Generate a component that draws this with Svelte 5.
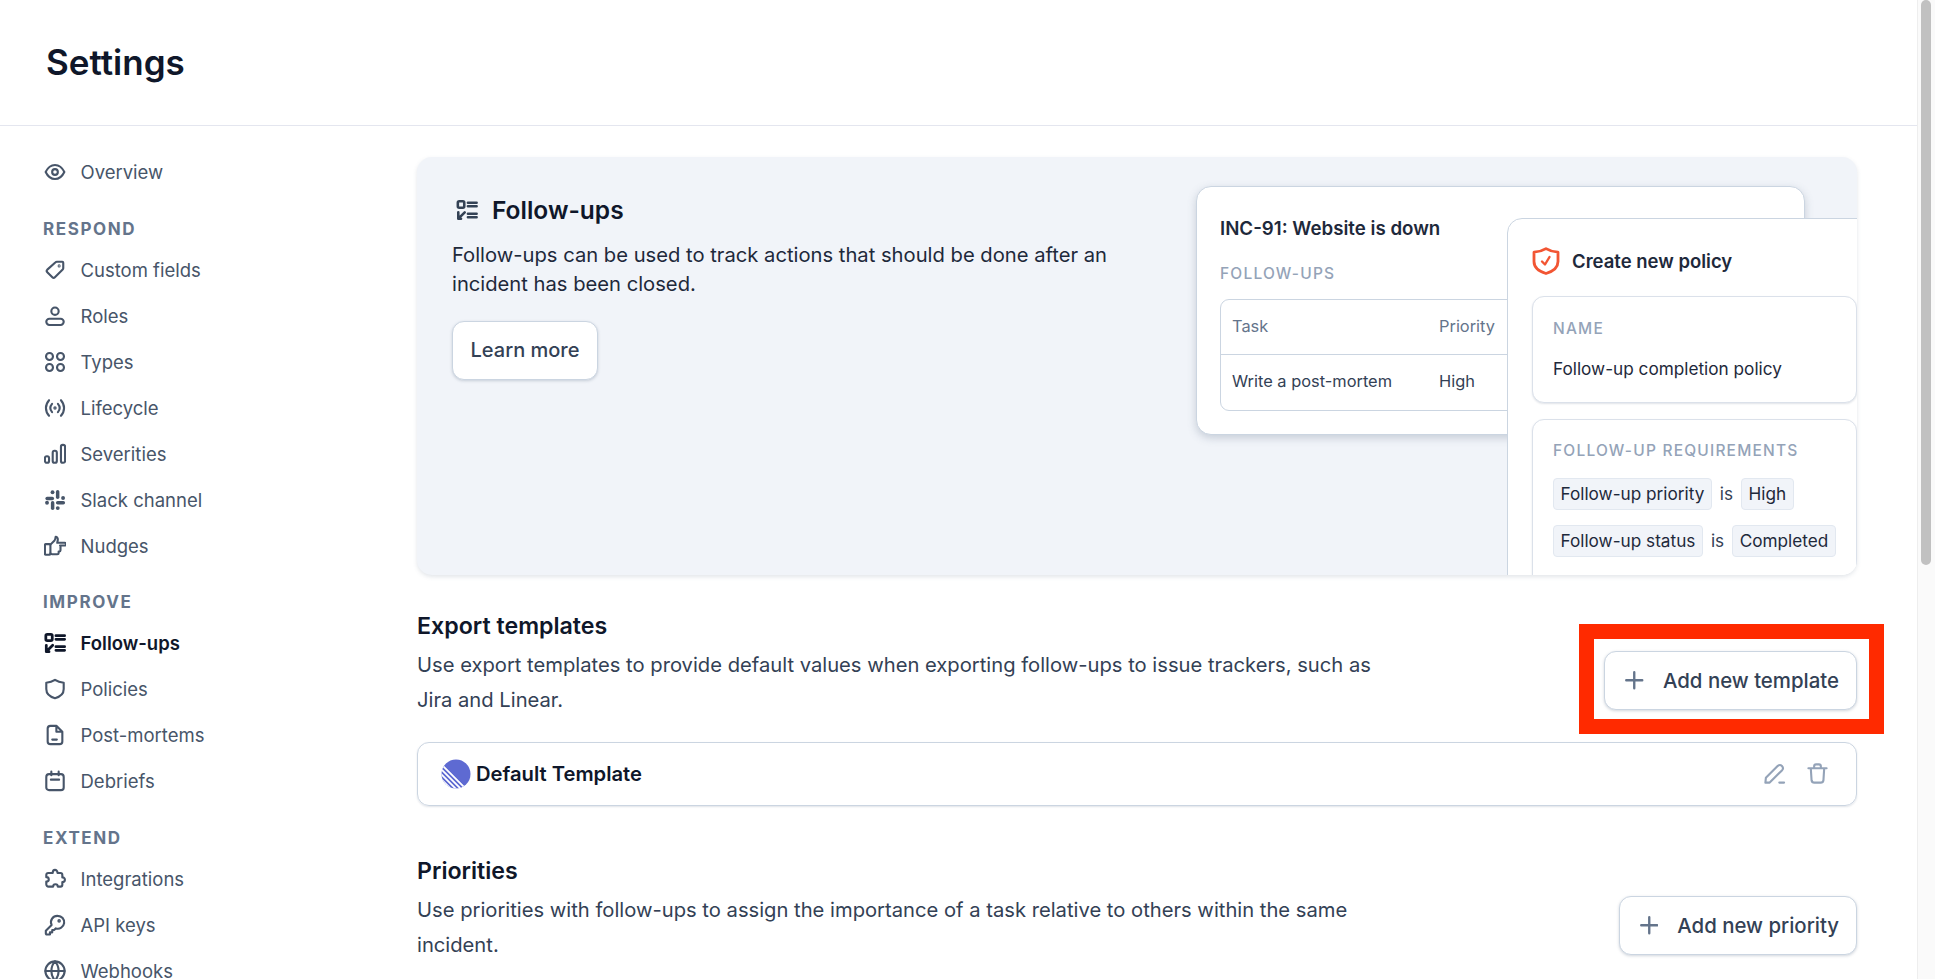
<script>
const icons = {
  eye: '<path d="M1.800 12C4.200 7 7.800 4.300 12 4.300S19.800 7 22.200 12c-2.400 5-6 7.700-10.200 7.700S4.200 17 1.800 12z"/><circle cx="12" cy="12" r="3.100"/>',
  tag: '<path d="M14 3h6a1 1 0 0 1 1 1v6a2 2 0 0 1-.6 1.400l-8.500 8.500a2 2 0 0 1-2.800 0l-5.500-5.500a2 2 0 0 1 0-2.800l9-8A2 2 0 0 1 14 3z"/><circle cx="16.500" cy="7.500" r=".5"/>',
  user: '<circle cx="12" cy="6.800" r="4"/><rect x="2.500" y="15" width="19" height="6.800" rx="3.400"/>',
  types: '<circle cx="6" cy="6" r="3.800"/><circle cx="18" cy="6" r="3.800"/><circle cx="6" cy="18" r="3.800"/><circle cx="18" cy="18" r="3.800"/>',
  cycle: '<path d="M5.500 3.500c-4.500 5-4.500 12 0 17M18.500 3.500c4.500 5 4.500 12 0 17M8.800 7.500c-2.400 2.800-2.400 6.200 0 9M15.200 7.500c2.400 2.800 2.400 6.200 0 9"/><circle cx="12" cy="12" r=".7"/>',
  sev: '<rect x="1" y="14.500" width="4.500" height="7" rx="2"/><rect x="9.500" y="8.500" width="4.500" height="13" rx="2"/><rect x="18.500" y="2" width="4.500" height="19.500" rx="2"/>',
  slack: '<g fill="currentColor" stroke="none"><rect x="1.500" y="8.500" width="9.500" height="3.800" rx="1.900"/><rect x="13" y="1" width="3.800" height="10" rx="1.900"/><rect x="13" y="13" width="10" height="3.800" rx="1.900"/><rect x="7.500" y="13" width="3.800" height="10" rx="1.900"/><circle cx="9.300" cy="3.500" r="2.100"/><circle cx="20.800" cy="9.800" r="2.100"/><circle cx="15" cy="20.800" r="2.100"/><circle cx="3.300" cy="15" r="2.100"/></g>',
  thumb: '<path d="M7 10.500 11.500 6c.7-1 1-2.200 1.200-4 1.600 0 2.600 1.500 2.300 3.500l-.5 3h8a1.500 1.500 0 0 1 0 3H17.500M18 11.500v5a1.500 1.500 0 0 1-1.500 1.500H16M16 18v1.500a1.500 1.500 0 0 1-1.500 1.500H9c-1 0-2-.3-2-1"/><rect x="1" y="10" width="6" height="11.500" rx="1"/>',
  check: '<rect x="2" y="2.500" width="7" height="7" rx="1.500"/><path d="M13 4h9.500M13 8h9.500M13 16h9.500M13 20h9.500M9.500 14.500l-5.500 5.500M2.500 14.500v7h3"/>',
  shield: '<path d="M12 2c3 1.900 5.800 2.700 9.500 3.100v6.900c0 5-3.700 8.500-9.500 10-5.800-1.500-9.500-5-9.500-10V5.100C6.200 4.700 9 3.900 12 2z"/>',
  doc: '<path d="M13.500 2H7a3 3 0 0 0-3 3v14a3 3 0 0 0 3 3h10a3 3 0 0 0 3-3V8.500zM13.500 2v6.500H20M9 17h5"/>',
  cal: '<rect x="2.500" y="4.500" width="19" height="17.500" rx="3"/><path d="M8 1.800v4M16 1.800v4M7.500 10.500h9"/>',
  puzzle: '<path d="M9.500 5.500c0-2 1.200-3.500 2.500-3.500s2.800 1.500 2.800 3.500h3.200a2 2 0 0 1 2 2v2.800c2-.2 2.800 1.400 2.800 2.400 0 1.300-1 2.600-2.800 2.600v3a2 2 0 0 1-2 2h-3c0-2-1.400-2.500-2.500-2.500s-2.500.5-2.500 2.500H5a2.500 2.500 0 0 1-2.500-2.500v-3c2 0 2.700-1.200 2.700-2.300S4.500 10 2.500 10V7.500a2 2 0 0 1 2-2z"/>',
  key: '<path d="M15 2a7 7 0 1 1-2 13.700l-2 1.800H9V20H6.500v2.300H3a1 1 0 0 1-1-1v-3l6.300-6.300A7 7 0 0 1 15 2z"/><circle cx="16.500" cy="7.500" r=".8"/>',
  globe: '<circle cx="12" cy="12" r="10.500"/><path d="M1.500 12h21M12 1.500c-5.300 5.800-5.300 15.200 0 21M12 1.500c5.300 5.800 5.300 15.200 0 21"/>'
}

const nav = [
  { items: [{ icon: 'eye', label: 'Overview' }] },
  { title: 'RESPOND', items: [
    { icon: 'tag', label: 'Custom fields' },
    { icon: 'user', label: 'Roles' },
    { icon: 'types', label: 'Types' },
    { icon: 'cycle', label: 'Lifecycle' },
    { icon: 'sev', label: 'Severities' },
    { icon: 'slack', label: 'Slack channel' },
    { icon: 'thumb', label: 'Nudges' }
  ] },
  { title: 'IMPROVE', items: [
    { icon: 'check', label: 'Follow-ups', active: true },
    { icon: 'shield', label: 'Policies' },
    { icon: 'doc', label: 'Post-mortems' },
    { icon: 'cal', label: 'Debriefs' }
  ] },
  { title: 'EXTEND', items: [
    { icon: 'puzzle', label: 'Integrations' },
    { icon: 'key', label: 'API keys' },
    { icon: 'globe', label: 'Webhooks' }
  ] }
]
</script>

{#snippet icon(name, cls)}
  <svg class={cls} viewBox="0 0 24 24" fill="none" stroke="currentColor" stroke-width="2.300" stroke-linecap="round" stroke-linejoin="round">{@html icons[name]}</svg>
{/snippet}

{#snippet plus()}
  <svg class="plus" viewBox="0 0 18 18" fill="none" stroke="currentColor" stroke-width="2.300" stroke-linecap="round"><path d="M9 1.200v15.600M1.200 9h15.600"/></svg>
{/snippet}

<div class="root">
  <div class="page">
    <header><h1>Settings</h1></header>
    <div class="body">
      <nav>
        {#each nav as group}
          <div class="group">
            {#if group.title}<div class="group-title">{group.title}</div>{/if}
            {#each group.items as item}
              <div class="nav-item" class:active={item.active}>
                {@render icon(item.icon, 'nav-icon')}
                <span>{item.label}</span>
              </div>
            {/each}
          </div>
        {/each}
      </nav>

      <main>
        <section class="hero">
          <div class="hero-text">
            <h2>{@render icon('check', 'hero-icon')}Follow-ups</h2>
            <p>Follow-ups can be used to track actions that should be done after an incident has been closed.</p>
            <button class="btn learn">Learn more</button>
          </div>
          <div class="art">
            <div class="inc-card">
              <div class="inc-title">INC-91: Website is down</div>
              <div class="label">FOLLOW-UPS</div>
              <div class="table">
                <div class="tr head"><span class="c1">Task</span><span>Priority</span></div>
                <div class="tr"><span class="c1">Write a post-mortem</span><span>High</span></div>
              </div>
            </div>
            <div class="policy-card">
              <div class="policy-title">
                <svg class="shield" viewBox="0 0 28 28" fill="none" stroke="#f25533" stroke-width="2.800" stroke-linecap="round" stroke-linejoin="round"><path d="M14 1.600c3.400 2.100 7 3.200 12 3.600v9.300c0 5.600-4.700 9.800-12 12-7.300-2.200-12-6.400-12-12V5.200c5-.4 8.600-1.500 12-3.600z"/><path d="m10 14.500 3 3 4.500-7.500" stroke-width="2.400"/></svg>
                Create new policy
              </div>
              <div class="box name-box">
                <div class="label">NAME</div>
                <div class="value">Follow-up completion policy</div>
              </div>
              <div class="box req-box">
                <div class="label">FOLLOW-UP REQUIREMENTS</div>
                <div class="req"><span class="chip">Follow-up priority</span>is<span class="chip">High</span></div>
                <div class="req"><span class="chip">Follow-up status</span>is<span class="chip">Completed</span></div>
              </div>
            </div>
          </div>
        </section>

        <section class="block first">
          <div class="block-head">
            <div class="block-text">
              <h3>Export templates</h3>
              <p>Use export templates to provide default values when exporting follow-ups to issue trackers, such as Jira and Linear.</p>
            </div>
            <button class="btn add">
              {@render plus()}Add new template
              <span class="highlight"></span>
            </button>
          </div>
          <div class="row">
            <div class="row-name">
              <svg class="linear" viewBox="0 0 30 30">
                <defs><clipPath id="disc"><circle cx="15" cy="15" r="14.500"/></clipPath></defs>
                <circle cx="15" cy="15" r="14.500" fill="#5e6ad2"/>
                <g clip-path="url(#disc)" stroke="#fff" stroke-width="1.800">
                  <path d="M-2 3 27 32M-2 8 22 32M-2 13 17 32M-2 18 12 32" />
                </g>
              </svg>
              Default Template
            </div>
            <div class="row-actions">
              <svg viewBox="0 0 24 24" fill="none" stroke="currentColor" stroke-width="2.200" stroke-linecap="round" stroke-linejoin="round"><path d="M2.500 21.500h4.500L20 8.500a3.200 3.200 0 0 0-4.500-4.500L3 16.500zM17 21.500h5"/></svg>
              <svg viewBox="0 0 24 24" fill="none" stroke="currentColor" stroke-width="2.200" stroke-linecap="round" stroke-linejoin="round"><path d="M2.500 6.500h19M8.500 6.500V4.500a2 2 0 0 1 2-2h3a2 2 0 0 1 2 2v2M5 6.500l.8 12.500a3 3 0 0 0 3 2.500h6.400a3 3 0 0 0 3-2.500L19 6.500"/></svg>
            </div>
          </div>
        </section>

        <section class="block">
          <div class="block-head">
            <div class="block-text">
              <h3>Priorities</h3>
              <p>Use priorities with follow-ups to assign the importance of a task relative to others within the same incident.</p>
            </div>
            <button class="btn add">{@render plus()}Add new priority</button>
          </div>
        </section>
      </main>
    </div>
  </div>
  <div class="scrollbar"><div class="thumb"></div></div>
</div>

<style>
:global(body) {
  background: #fff;
  font-family: Inter, "Noto Sans", sans-serif;
  overflow: hidden;
}

.root {
  display: flex;
  height: 979px;
  overflow: hidden;
  color: #1e293b;
}

.page {
  flex: 1;
  min-width: 0;
}

header {
  height: 126px;
  box-sizing: border-box;
  border-bottom: 1px solid #e4e6ef;
  padding: 0 46px;
  display: flex;
  align-items: center;
}

h1 {
  margin: 0 0 2px;
  font-size: 35px;
  font-weight: 600;
  color: #0f172a;
}

.body {
  display: flex;
}

nav {
  width: 417px;
  box-sizing: border-box;
  padding: 23px 0 0 43px;
  flex: none;
}

.group-title {
  height: 24px;
  line-height: 24px;
  margin: 21.500px 0 6px;
  font-size: 17px;
  font-weight: 700;
  letter-spacing: 1.600px;
  color: #64748b;
}

.nav-item {
  height: 46px;
  display: flex;
  align-items: center;
  gap: 14.500px;
  padding-left: 1px;
  font-size: 18.500px;
  color: #475569;
}

.nav-item.active {
  color: #0f172a;
  font-weight: 600;
}

.nav-icon {
  width: 22px;
  height: 22px;
  flex: none;
}

.active .nav-icon {
  stroke-width: 3;
}

main {
  flex: 1;
  padding: 31px 60px 0 0;
  min-width: 0;
}

.hero {
  display: flex;
  height: 418px;
  background: #f1f4f9;
  border-radius: 15px;
  box-shadow: 0 2px 4px rgba(100, 116, 139, .18);
  overflow: hidden;
}

.hero-text {
  width: 779px;
  flex: none;
  box-sizing: border-box;
  padding: 36px 0 0 35px;
}

.hero-text h2 {
  margin: 0;
  display: flex;
  align-items: center;
  gap: 14px;
  font-size: 24.500px;
  line-height: 34px;
  font-weight: 600;
  color: #0f172a;
}

.hero-icon {
  width: 22px;
  height: 22px;
  margin-left: 4px;
  color: #334155;
  stroke-width: 2.800;
}

.hero-text p {
  margin: 13px 0 0;
  width: 680px;
  font-size: 20.200px;
  line-height: 29px;
  color: #1e293b;
}

.btn {
  font-family: inherit;
  background: #fff;
  border: 1px solid #cbd5e1;
  border-radius: 12px;
  box-shadow: 0 1px 3px rgba(100, 116, 139, .3);
  color: #334155;
  font-weight: 500;
  font-size: 20.400px;
}

.learn {
  margin-top: 22.500px;
  width: 146px;
  height: 59px;
  padding: 0;
  font-size: 20px;
}

.art {
  position: relative;
  flex: 1;
  min-width: 0;
}

.inc-card {
  margin: 29px 52px 0 0;
  height: 249px;
  box-sizing: border-box;
  background: #fff;
  border: 1px solid #cbd5e1;
  border-radius: 15px;
  box-shadow: 0 3px 8px rgba(100, 116, 139, .3);
  padding: 28px 23px 0;
}

.inc-title {
  font-size: 18.700px;
  font-weight: 600;
  line-height: 28px;
  color: #1e293b;
}

.label {
  font-size: 15.500px;
  font-weight: 500;
  letter-spacing: 1.200px;
  color: #94a3b8;
  line-height: 22px;
}

.inc-card .label {
  margin-top: 20px;
}

.table {
  margin-top: 14px;
  border: 1px solid #cbd5e1;
  border-radius: 9px;
  font-size: 16.400px;
  color: #334155;
}

.tr {
  height: 55px;
  box-sizing: border-box;
  padding: 0 0 3px 11px;
  display: flex;
  align-items: center;
}

.tr.head {
  color: #64748b;
  border-bottom: 1px solid #cbd5e1;
}

.c1 {
  width: 207px;
}

.policy-card {
  position: absolute;
  left: 311px;
  top: 61px;
  width: 370px;
  bottom: -30px;
  box-sizing: border-box;
  background: #fff;
  border: 1px solid #cbd5e1;
  border-radius: 15px;
  padding: 28px 0 0 24px;
}

.policy-title {
  display: flex;
  align-items: center;
  gap: 12px;
  font-size: 18.500px;
  font-weight: 600;
  line-height: 28px;
  color: #1e293b;
}

.shield {
  width: 28px;
  height: 28px;
  flex: none;
}

.box {
  width: 325px;
  box-sizing: border-box;
  background: #fff;
  border: 1px solid #dbe1ea;
  border-radius: 12px;
  padding: 21px 20px 0;
  box-shadow: 0 1px 2px rgba(100, 116, 139, .2);
}

.name-box {
  margin-top: 20.500px;
  height: 107px;
}

.value {
  margin-top: 17px;
  font-size: 17.200px;
  line-height: 24px;
  color: #1e293b;
}

.req-box {
  margin-top: 16px;
  height: 200px;
  padding-top: 20px;
}

.req {
  display: flex;
  align-items: center;
  gap: 8px;
  margin-top: 15px;
  font-size: 17.200px;
  color: #334155;
}

.req-box .label {
  margin-bottom: 16px;
}

.chip {
  height: 32px;
  line-height: 30px;
  box-sizing: border-box;
  padding: 0 6.500px;
  background: #f1f4f9;
  border: 1px solid #e2e8f0;
  border-radius: 4px;
  color: #1e293b;
  white-space: nowrap;
}

.block {
  margin-top: 50.500px;
}

.block.first {
  margin-top: 36px;
}

.block-head {
  display: flex;
  justify-content: space-between;
  align-items: flex-end;
}

.block-text {
  width: 980px;
}

h3 {
  margin: 0 0 7px;
  font-size: 23.200px;
  line-height: 30px;
  font-weight: 600;
  color: #0f172a;
}

.block-text p {
  margin: 0;
  font-size: 20.200px;
  line-height: 34.500px;
  color: #334155;
}

.add {
  position: relative;
  height: 59px;
  margin-bottom: 7px;
  padding: 0 17px 0 20px;
  display: flex;
  align-items: center;
  gap: 19px;
  white-space: nowrap;
}

.plus {
  width: 18.500px;
  height: 18.500px;
  color: #64748b;
}

.highlight {
  position: absolute;
  top: -28px;
  bottom: -25px;
  left: -26px;
  right: -28px;
  border: 15px solid #ff2a00;
}

.row {
  margin-top: 24.500px;
  height: 64px;
  box-sizing: border-box;
  border: 1px solid #cbd5e1;
  border-radius: 12px;
  box-shadow: 0 1px 2px rgba(100, 116, 139, .2);
  display: flex;
  align-items: center;
  justify-content: space-between;
  padding: 0 27px 0 23px;
}

.row-name {
  display: flex;
  align-items: center;
  gap: 5px;
  font-size: 20.200px;
  font-weight: 600;
  color: #0f172a;
}

.linear {
  width: 30px;
  height: 30px;
}

.row-actions {
  display: flex;
  gap: 20px;
  color: #94a3b8;
}

.row-actions svg {
  width: 23px;
  height: 23px;
}

.scrollbar {
  width: 18px;
  flex: none;
  background: #fafafa;
  border-left: 1px solid #eee;
  box-sizing: border-box;
  padding: 0 4px 0 3px;
}

.thumb {
  height: 565px;
  background: #c1c1c1;
  border-radius: 5px;
}
</style>
